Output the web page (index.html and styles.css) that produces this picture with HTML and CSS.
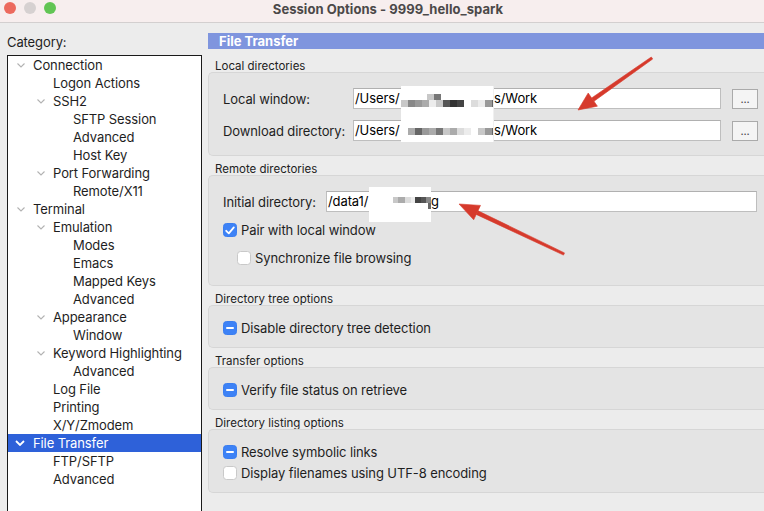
FILE: index.html
```html
<!DOCTYPE html>
<html>
<head>
<meta charset="utf-8">
<link rel="stylesheet" href="styles.css">
</head>
<body>
<div class="titlebar">
  <div class="lights"><span class="light red"></span><span class="light gray"></span><span class="light green"></span></div>
  <div class="title">Session Options - 9999_hello_spark</div>
</div>
<div class="main">
  <div class="left">
    <div class="cat-label">Category:</div>
    <div class="tree">
      <div class="row l0"><span class="chev"><svg width="8" height="5" viewBox="0 0 8 5"><polyline points="0.5,0.5 4,4 7.5,0.5"/></svg></span>Connection</div>
      <div class="row l1"><span class="chev"></span>Logon Actions</div>
      <div class="row l1"><span class="chev"><svg width="8" height="5" viewBox="0 0 8 5"><polyline points="0.5,0.5 4,4 7.5,0.5"/></svg></span>SSH2</div>
      <div class="row l2"><span class="chev"></span>SFTP Session</div>
      <div class="row l2"><span class="chev"></span>Advanced</div>
      <div class="row l2"><span class="chev"></span>Host Key</div>
      <div class="row l1"><span class="chev"><svg width="8" height="5" viewBox="0 0 8 5"><polyline points="0.5,0.5 4,4 7.5,0.5"/></svg></span>Port Forwarding</div>
      <div class="row l2"><span class="chev"></span>Remote/X11</div>
      <div class="row l0"><span class="chev"><svg width="8" height="5" viewBox="0 0 8 5"><polyline points="0.5,0.5 4,4 7.5,0.5"/></svg></span>Terminal</div>
      <div class="row l1"><span class="chev"><svg width="8" height="5" viewBox="0 0 8 5"><polyline points="0.5,0.5 4,4 7.5,0.5"/></svg></span>Emulation</div>
      <div class="row l2"><span class="chev"></span>Modes</div>
      <div class="row l2"><span class="chev"></span>Emacs</div>
      <div class="row l2"><span class="chev"></span>Mapped Keys</div>
      <div class="row l2"><span class="chev"></span>Advanced</div>
      <div class="row l1"><span class="chev"><svg width="8" height="5" viewBox="0 0 8 5"><polyline points="0.5,0.5 4,4 7.5,0.5"/></svg></span>Appearance</div>
      <div class="row l2"><span class="chev"></span>Window</div>
      <div class="row l1"><span class="chev"><svg width="8" height="5" viewBox="0 0 8 5"><polyline points="0.5,0.5 4,4 7.5,0.5"/></svg></span>Keyword Highlighting</div>
      <div class="row l2"><span class="chev"></span>Advanced</div>
      <div class="row l1"><span class="chev"></span>Log File</div>
      <div class="row l1"><span class="chev"></span>Printing</div>
      <div class="row l1"><span class="chev"></span>X/Y/Zmodem</div>
      <div class="row l0 selected"><span class="chev"><svg width="10" height="6" viewBox="0 0 10 6"><polyline points="1,1 5,5 9,1"/></svg></span>File Transfer</div>
      <div class="row l1"><span class="chev"></span>FTP/SFTP</div>
      <div class="row l1"><span class="chev"></span>Advanced</div>
    </div>
  </div>
  <div class="right">
    <div class="header">File Transfer</div>

    <div class="sec-label first">Local directories</div>
    <div class="group g-local">
      <div class="field">
        <span class="flabel w130">Local window:</span>
        <div class="input w368"><span class="pre pre-users">/Users/</span>s/Work</div>
        <div class="btn">...</div>
      </div>
      <div class="field gap11">
        <span class="flabel w130">Download directory:</span>
        <div class="input w368"><span class="pre pre-users">/Users/</span>s/Work</div>
        <div class="btn">...</div>
      </div>
      <div class="mask mask-local">
        <div class="px-row rowB"><span class="k3"></span><span class="k7"></span></div>
        <div class="px-row"><span class="k3"></span><span class="k6"></span><span class="k5"></span><span class="k4"></span><span class="k1"></span><span class="k3"></span><span class="k9"></span><span class="k11"></span><span class="k10"></span><span class="kw"></span><span class="k2"></span><span class="k1"></span><span class="k5"></span><span class="k8"></span></div>
        <div class="px-row row2"><span class="kw"></span><span class="k4"></span><span class="k8"></span><span class="k5"></span><span class="k4"></span><span class="k7"></span><span class="k3"></span><span class="k4"></span><span class="k2"></span><span class="k1"></span><span class="kw"></span><span class="k3"></span><span class="k5"></span><span class="k8"></span></div>
      </div>
    </div>

    <div class="sec-label">Remote directories</div>
    <div class="group g-remote">
      <div class="field">
        <span class="flabel w103">Initial directory:</span>
        <div class="input w431"><span class="pre pre-data">/data1/</span>g</div>
      </div>
      <div class="check cb-first"><span class="box checked"><svg width="10" height="9" viewBox="0 0 10 9"><polyline points="1.2,4.8 3.8,7.4 8.8,1.4"/></svg></span>Pair with local window</div>
      <div class="check cb-second indent"><span class="box"></span>Synchronize file browsing</div>
      <div class="mask mask-remote">
        <div class="px-row rowR"><span class="k3 n5"></span><span class="k4"></span><span class="k2 n6"></span><span class="k1 n4"></span><span class="k10 n6"></span><span class="k9 n5"></span><span class="k6 n5"></span></div>
        <div class="px-row rowR2"><span class="k8 n3"></span></div>
      </div>
    </div>

    <div class="sec-label">Directory tree options</div>
    <div class="group g-single">
      <div class="check"><span class="box mixed"><i></i></span>Disable directory tree detection</div>
    </div>

    <div class="sec-label">Transfer options</div>
    <div class="group g-single">
      <div class="check"><span class="box mixed"><i></i></span>Verify file status on retrieve</div>
    </div>

    <div class="sec-label">Directory listing options</div>
    <div class="group g-single">
      <div class="check"><span class="box mixed"><i></i></span>Resolve symbolic links</div>
      <div class="check gap3"><span class="box"></span>Display filenames using UTF-8 encoding</div>
    </div>
  </div>
</div>
<svg class="arrows" width="764" height="511" viewBox="0 0 764 511">
  <polygon points="652.7,59.0 651.3,57.0 591.6,98.0 594.0,101.2"/>
  <polygon points="578,110 597.4,106.2 588.2,93.0"/>
  <polygon points="564.5,252.9 563.5,255.1 476.2,214.4 478.0,210.8"/>
  <polygon points="459,204 480.5,205.4 473.7,219.8"/>
</svg>
</body>
</html>
```
FILE: styles.css
```css
* { box-sizing: border-box; }
html, body { margin: 0; padding: 0; }
body {
  width: 764px;
  height: 511px;
  overflow: hidden;
  position: relative;
  background: #ececec;
  font-family: Inter, "Liberation Sans", Arial, sans-serif;
  font-size: 13px;
  letter-spacing: -0.1px;
  color: #1e1e1e;
}

/* title bar */
.titlebar {
  height: 23px;
  background: #f7eeee;
  border-bottom: 1px solid #d3cfcf;
  display: flex;
  align-items: center;
}
.lights {
  width: 56px;
  display: flex;
  gap: 8px;
  padding-left: 4px;
  margin-top: -6px;
}
.light { width: 12px; height: 12px; border-radius: 50%; display: block; }
.red { background: #ec6a5e; }
.gray { background: #d6d1d1; }
.green { background: #61c554; }
.title {
  flex: 1;
  text-align: center;
  padding-right: 44px;
  font-weight: 700;
  font-size: 13px;
  letter-spacing: 0.05px;
  color: #4b4949;
  margin-top: -5px;
}

.main { display: flex; align-items: flex-start; }

/* left column */
.left { width: 195px; margin-left: 7px; flex: none; }
.cat-label { padding-top: 11px; line-height: 16px; height: 27px; }
.tree {
  margin-top: 5px;
  height: 470px;
  background: #fff;
  border: 1px solid #1a1a1a;
}
.row {
  height: 18px;
  display: flex;
  align-items: center;
  white-space: nowrap;
}
.row.l0 { padding-left: 9px; }
.row.l1 { padding-left: 29px; }
.row.l2 { padding-left: 49px; }
.chev { width: 16px; flex: none; display: flex; align-items: center; }
.chev svg polyline { fill: none; stroke: #b2b2b2; stroke-width: 1.1; }
.row.selected { background: #2e61d9; color: #fff; padding-left: 7px; }
.row.selected .chev { width: 18px; }
.row.selected .chev svg polyline { stroke: #fff; stroke-width: 1.8; }

/* right column */
.right { width: 564px; margin-left: 6px; margin-top: 10px; flex: none; }
.header {
  height: 16px;
  line-height: 16px;
  background: #7f95de;
  color: #fff;
  font-weight: 700;
  letter-spacing: 0;
  padding-left: 11px;
}
.sec-label {
  height: 19px;
  padding-top: 6px;
  padding-left: 7px;
  line-height: 14px;
  font-size: 11.5px;
  letter-spacing: 0;
  color: #222;
}
.sec-label.first { height: 23px; padding-top: 10px; }

.group {
  position: relative;
  background: #e4e4e4;
  border: 1px solid #d6d6d6;
  border-right: none;
  border-radius: 5px 0 0 5px;
  padding-left: 14px;
}
.g-local { padding-top: 15px; padding-bottom: 14px; }
.g-remote { padding-top: 15px; padding-bottom: 18px; }
.g-single { padding-top: 13px; padding-bottom: 10px; }

.field { display: flex; align-items: center; height: 21px; }
.field.gap11 { margin-top: 11px; }
.flabel { flex: none; white-space: nowrap; color: #1e1e1e; }
.w130 { width: 130px; }
.w103 { width: 103px; }
.input {
  flex: none;
  height: 21px;
  background: #fff;
  border: 1px solid #bebebe;
  border-top-color: #b0b0b0;
  padding-left: 1px;
  line-height: 19px;
  display: flex;
  color: #000;
  white-space: nowrap;
}
.w368 { width: 368px; }
.w431 { width: 431px; }
.pre { flex: none; display: block; }
.pre-users { width: 139px; }
.pre-data { width: 103px; }
.btn {
  margin-left: 11px;
  width: 26px;
  height: 20px;
  background: #f4f4f4;
  border: 1px solid #aaaaaa;
  font-size: 11px;
  line-height: 19px;
  text-align: center;
  color: #444;
}

.check { display: flex; align-items: center; height: 18px; gap: 4px; color: #1e1e1e; white-space: nowrap; }
.check.cb-first { margin-top: 9px; }
.check.cb-second { margin-top: 10px; }
.check.indent { padding-left: 14px; }
.check.gap3 { margin-top: 3px; }
.box {
  width: 14px;
  height: 14px;
  flex: none;
  border-radius: 3.5px;
  background: #fff;
  border: 1px solid #c9c9c9;
  display: flex;
  align-items: center;
  justify-content: center;
}
.box.checked, .box.mixed { background: #3d82f6; border-color: #3a7ef0; }
.box.checked svg polyline { fill: none; stroke: #fff; stroke-width: 1.8; stroke-linecap: round; stroke-linejoin: round; }
.box.mixed i { display: block; width: 8px; height: 2px; background: #fff; border-radius: 1px; }

/* privacy masks over the paths */
.mask { position: absolute; background: #fff; overflow: hidden; }
.mask-local { left: 192px; top: 13px; width: 93px; height: 56px; border-right: 1px solid #f0f0f0; }
.mask-remote { left: 160px; top: 11px; width: 62px; height: 35px; }
.px-row { display: flex; height: 7px; }
.px-row span { width: 7px; height: 7px; flex: none; }
.rowB { margin-top: 8px; margin-left: 26px; height: 6px; }
.rowB span { height: 6px; }
.row2 { margin-top: 21px; }
.rowR { margin-top: 10px; margin-left: 24px; height: 6px; }
.rowR span { height: 6px; }
.rowR2 { margin-left: 59px; height: 6px; }
.rowR2 span { height: 6px; }
.n3 { width: 3px !important; }
.n4 { width: 4px !important; }
.n5 { width: 5px !important; }
.n6 { width: 6px !important; }
.kw { background: #fff; }
.k1 { background: #ececec; }
.k2 { background: #dcdcdc; }
.k3 { background: #c8c8c8; }
.k4 { background: #ababab; }
.k5 { background: #999; }
.k6 { background: #888; }
.k7 { background: #777; }
.k8 { background: #666; }
.k9 { background: #555; }
.k10 { background: #444; }
.k11 { background: #333; }

.arrows { position: absolute; left: 0; top: 0; pointer-events: none; }
.arrows polygon { fill: #d63a2c; stroke: #d63a2c; stroke-width: 0.6; stroke-linejoin: round; }
```
